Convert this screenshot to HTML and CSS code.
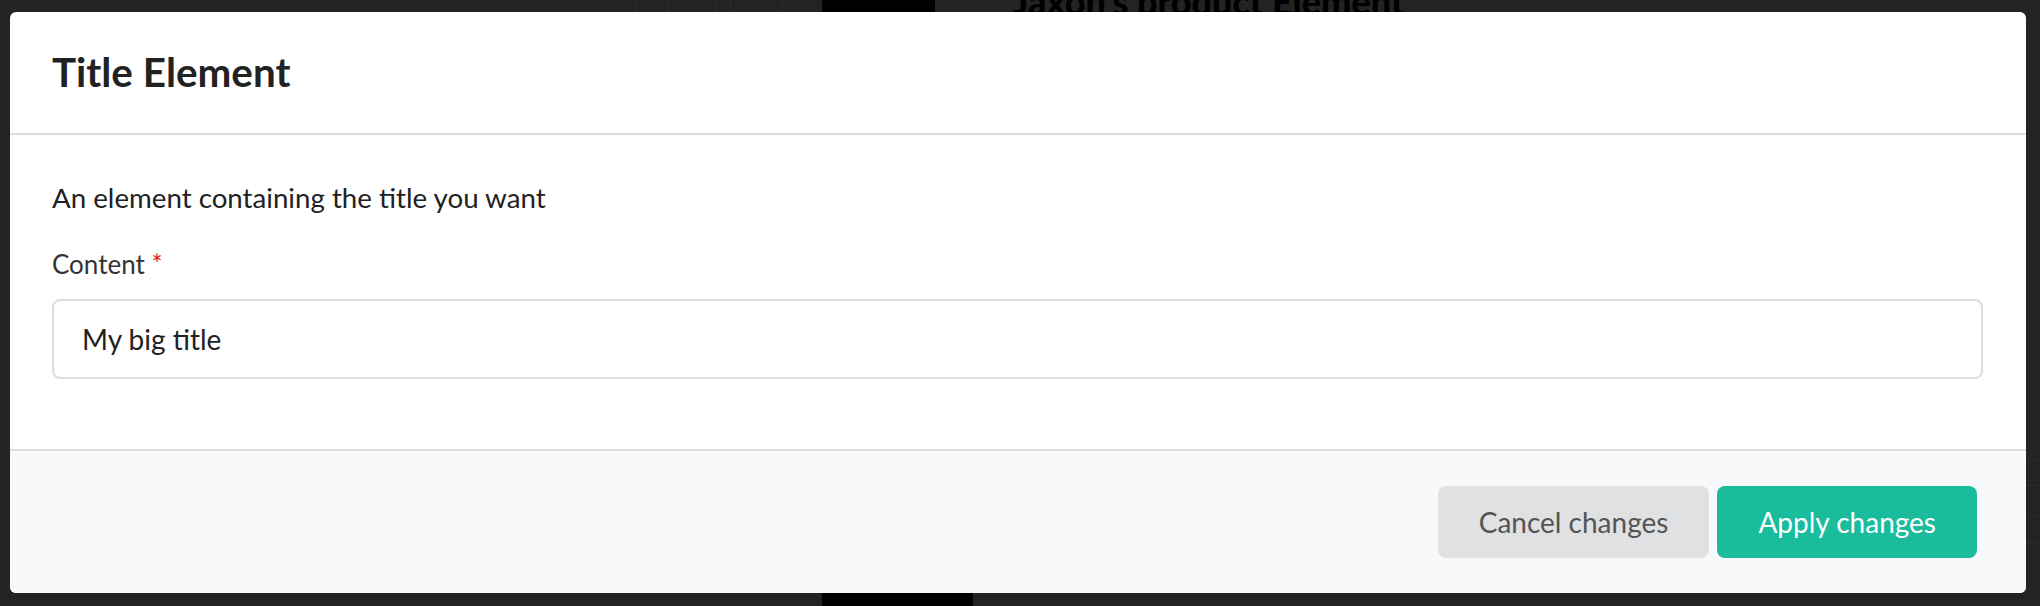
FILE: index.html
```html
<!DOCTYPE html>
<html lang="en">
<head>
<meta charset="utf-8">
<title>Title Element</title>
<link rel="stylesheet" href="styles.css">
</head>
<body>
<div class="backdrop">
  <div class="under under-title">Jaxon's product Element</div>
  <div class="under under-box-top"></div>
  <div class="under under-box-bottom"></div>
  <div class="under under-line l1"></div>
  <div class="under under-line l2"></div>
  <div class="under under-line l3"></div>
  <div class="under under-line l4"></div>
  <div class="under under-line l5"></div>
  <div class="under under-rule r1"></div>
  <div class="under under-rule r2"></div>
  <div class="under under-rule r3"></div>
  <div class="under under-rule r4"></div>
</div>
<div class="overlay">
  <div class="modal">
    <header class="modal-head">
      <h1 class="modal-title">Title Element</h1>
    </header>
    <section class="modal-body">
      <p class="description">An element containing the title you want</p>
      <label class="field-label" for="content">Content <span class="required">*</span></label>
      <input class="field-input" id="content" type="text" value="My big title">
    </section>
    <footer class="modal-foot">
      <button class="btn btn-cancel" type="button">Cancel changes</button>
      <button class="btn btn-apply" type="button">Apply changes</button>
    </footer>
  </div>
</div>
</body>
</html>
```

FILE: styles.css
```css
* { box-sizing: border-box; }

html, body {
  margin: 0;
  padding: 0;
  width: 2040px;
  height: 606px;
  overflow: hidden;
  background: #232323;
  font-family: Lato, "Open Sans", "Liberation Sans", sans-serif;
}

.backdrop {
  position: absolute;
  inset: 0;
  overflow: hidden;
}

.under { position: absolute; }

.under-title {
  left: 1013px;
  top: -19px;
  font-size: 36px;
  line-height: 40px;
  font-weight: 900;
  color: #000;
  white-space: nowrap;
}

.under-box-top {
  left: 822px;
  top: 0;
  width: 113px;
  height: 12px;
  background: #000;
}

.under-box-bottom {
  left: 822px;
  top: 593px;
  width: 151px;
  height: 13px;
  background: #000;
}

.under-line {
  top: 0;
  width: 1px;
  height: 12px;
  background: #2e2e2e;
}
.l1 { left: 635px; }
.l2 { left: 667px; }
.l3 { left: 716px; }
.l4 { left: 730px; }
.l5 { left: 782px; }

.under-rule {
  left: 2026px;
  width: 14px;
  height: 1px;
  background: #2c2c2c;
}
.r1 { top: 460px; }
.r2 { top: 485px; }
.r3 { top: 515px; }
.r4 { top: 542px; }

.overlay {
  position: relative;
  display: flex;
  width: 2040px;
  height: 606px;
  padding: 12px 14px 13px 10px;
}

.modal {
  flex: 1;
  display: flex;
  flex-direction: column;
  background: #fff;
  border-radius: 6px;
  overflow: hidden;
}

.modal-head {
  flex: none;
  display: flex;
  align-items: center;
  padding: 0 42px;
  border-bottom: 2px solid #dcdcdc;
  height: 123px;
}

.modal-title {
  margin: 0;
  font-size: 40.4px;
  line-height: 1.2;
  font-weight: 700;
  color: #222;
}

.modal-body {
  flex: none;
  display: flex;
  flex-direction: column;
  padding: 42px 43px 42px 42px;
  border-bottom: 2px solid #dcdcdc;
  height: 316px;
}

.description {
  margin: 0 0 26px;
  font-size: 27.7px;
  line-height: 42px;
  color: #222;
}

.field-label {
  display: block;
  margin-bottom: 15px;
  font-size: 26px;
  line-height: 39px;
  color: #333;
}

.required { color: #e52222; }

.field-input {
  display: block;
  width: 100%;
  height: 80px;
  margin: 0;
  padding: 0 28px;
  border: 2px solid #dedede;
  border-radius: 8px;
  background: #fff;
  font-family: inherit;
  font-size: 28px;
  line-height: 76px;
  color: #222;
  outline: none;
}

.modal-foot {
  flex: 1;
  display: flex;
  justify-content: flex-end;
  align-items: center;
  gap: 8px;
  padding: 0 49px 0 0;
  background: #f8f9fb;
}

.btn {
  height: 72px;
  padding: 0 41px;
  border: none;
  border-radius: 8px;
  font-family: inherit;
  font-size: 28px;
  line-height: 72px;
  cursor: pointer;
}

.btn-cancel {
  background: #e0e1e3;
  color: #555;
}

.btn-apply {
  background: #1abc9c;
  color: #fff;
}
```
